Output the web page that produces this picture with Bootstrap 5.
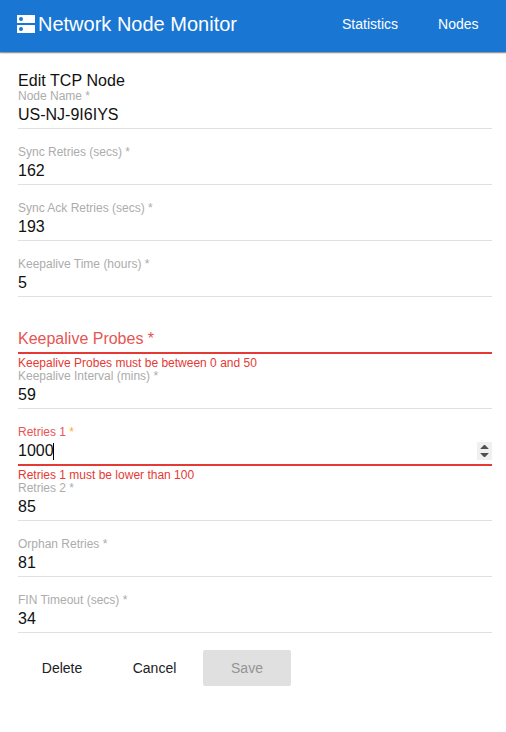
<!DOCTYPE html>
<html lang="en">
<head>
<meta charset="utf-8">
<meta name="viewport" content="width=device-width, initial-scale=1">
<title>Network Node Monitor</title>
<link href="https://cdn.jsdelivr.net/npm/bootstrap@5.3.0/dist/css/bootstrap.min.css" rel="stylesheet">
<style>
body{font-family:"Liberation Sans",Arial,sans-serif;font-size:16px;color:#212121;background:#fff;overflow:hidden}
.topbar{height:52px;background:#1976d2;padding:0 27.500px 4px 17px;box-shadow:0 1px 1px rgba(0,0,0,.3),0 1px 2px rgba(0,0,0,.2)}
.topbar .navbar-brand{font-size:20px;line-height:24px;gap:3px}
.topbar .nav-link{font-size:14px;line-height:20px;color:#fff}
.topbar .navbar-nav{gap:40px}
.node-form{padding:20px 14px 0 18px}
.form-title{font-size:16px;line-height:17px;height:17px;color:#111;letter-spacing:.06px}
.fld-label{font-size:12px;line-height:14px;height:14px;color:#acacac}
.fld-row{height:26px;border-bottom:1px solid #e0e0e0;padding-top:1px;padding-bottom:2px}
.fld-row .form-control-plaintext{font-size:16px;line-height:22px;height:22px;color:#111;outline:0;cursor:text}
.fld-note{font-size:12px;line-height:14px;height:16px;padding-top:2px;color:#e53935}
.is-bad .fld-label{color:#e75552}
.is-bad .fld-label b{color:#ffab30;font-weight:400}
.is-bad .fld-row{border-bottom:2px solid #e53935;height:27px}
.is-bad .fld-note{height:15px;padding-top:2px}
.big-label{font-size:16px;line-height:22px;color:#e75552}
.caret{width:1px;height:17px;margin-left:-1px;background:#000}
.spin{width:15px;height:18px;background:#f0f0f0}
.actions{gap:4.5px;margin-top:1px}
.actions .btn{width:88px;height:36px;font-size:14px;line-height:20px;padding:0;border:0;border-radius:2px;color:#212121}
.actions .btn:disabled{background:#e0e0e0;color:#949494;opacity:1}
</style>
</head>
<body>
<nav class="topbar navbar navbar-expand navbar-dark d-flex align-items-center justify-content-between">
  <a class="navbar-brand d-flex align-items-center text-white p-0 m-0" href="#">
    <svg width="18" height="18" viewBox="0 0 18 18" fill="#fff" aria-hidden="true"><path fill-rule="evenodd" d="M.5 0h17a.5.5 0 0 1 .5.5v7a.5.5 0 0 1-.5.5H.5a.5.5 0 0 1-.5-.5v-7A.5.5 0 0 1 .5 0zM4 2a2 2 0 1 0 0 4 2 2 0 0 0 0-4zM.5 10h17a.5.5 0 0 1 .5.5v7a.5.5 0 0 1-.5.5H.5a.5.5 0 0 1-.5-.5v-7a.5.5 0 0 1 .5-.5zM4 12a2 2 0 1 0 0 4 2 2 0 0 0 0-4z"/></svg>
    <span>Network Node Monitor</span>
  </a>
  <div class="navbar-nav">
    <a class="nav-link p-0" href="#">Statistics</a>
    <a class="nav-link p-0" href="#">Nodes</a>
  </div>
</nav>
<main class="node-form">
  <h1 class="form-title fw-normal m-0">Edit TCP Node</h1>
  <form>
    <div><div class="fld-label">Node Name *</div><div class="fld-row"><div class="form-control-plaintext p-0 border-0">US-NJ-9I6IYS</div></div><div class="fld-note"></div></div>
    <div><div class="fld-label">Sync Retries (secs) *</div><div class="fld-row"><div class="form-control-plaintext p-0 border-0">162</div></div><div class="fld-note"></div></div>
    <div><div class="fld-label">Sync Ack Retries (secs) *</div><div class="fld-row"><div class="form-control-plaintext p-0 border-0">193</div></div><div class="fld-note"></div></div>
    <div><div class="fld-label">Keepalive Time (hours) *</div><div class="fld-row"><div class="form-control-plaintext p-0 border-0">5</div></div><div class="fld-note"></div></div>
    <div class="is-bad"><div class="fld-label"></div><div class="fld-row"><div class="big-label">Keepalive Probes *</div></div><div class="fld-note">Keepalive Probes must be between 0 and 50</div></div>
    <div><div class="fld-label">Keepalive Interval (mins) *</div><div class="fld-row"><div class="form-control-plaintext p-0 border-0">59</div></div><div class="fld-note"></div></div>
    <div class="is-bad"><div class="fld-label">Retries 1 <b>*</b></div><div class="fld-row d-flex align-items-center"><div class="form-control-plaintext p-0 border-0 d-flex align-items-center">1000<span class="caret"></span></div>
      <svg class="spin flex-shrink-0" viewBox="0 0 15 18" fill="#505050" aria-hidden="true"><path d="M3.500 7h8v-.6L8 3H7L3.500 6.400zM3.500 11h8v.6L8 15H7l-3.500-3.400z"/></svg></div><div class="fld-note">Retries 1 must be lower than 100</div></div>
    <div><div class="fld-label">Retries 2 *</div><div class="fld-row"><div class="form-control-plaintext p-0 border-0">85</div></div><div class="fld-note"></div></div>
    <div><div class="fld-label">Orphan Retries *</div><div class="fld-row"><div class="form-control-plaintext p-0 border-0">81</div></div><div class="fld-note"></div></div>
    <div><div class="fld-label">FIN Timeout (secs) *</div><div class="fld-row"><div class="form-control-plaintext p-0 border-0">34</div></div><div class="fld-note"></div></div>
    <div class="actions d-flex">
      <button type="button" class="btn">Delete</button>
      <button type="button" class="btn">Cancel</button>
      <button type="submit" class="btn" disabled>Save</button>
    </div>
  </form>
</main>
<script src="https://cdn.jsdelivr.net/npm/bootstrap@5.3.0/dist/js/bootstrap.bundle.min.js"></script>
</body>
</html>
